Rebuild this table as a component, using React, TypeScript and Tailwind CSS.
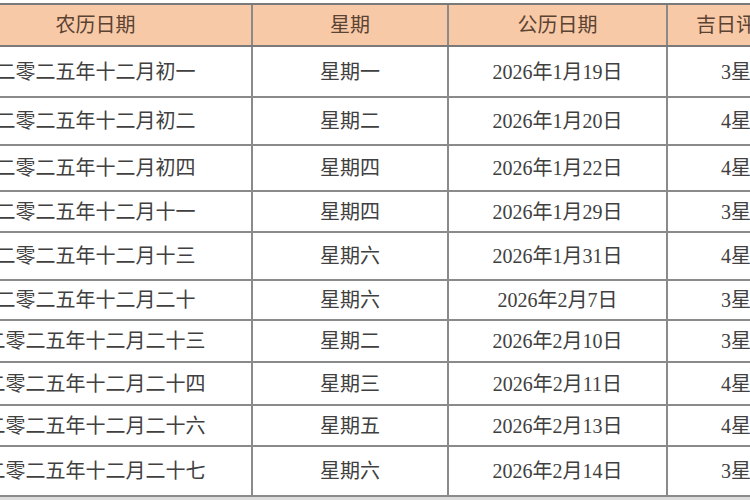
import React from "react";

const rows: { lunar: string; week: string; date: string; score: string; h: string }[] = [
  { lunar: "二零二五年十二月初一", week: "星期一", date: "2026年1月19日", score: "3星", h: "h-[51px]" },
  { lunar: "二零二五年十二月初二", week: "星期二", date: "2026年1月20日", score: "4星", h: "h-[48px]" },
  { lunar: "二零二五年十二月初四", week: "星期四", date: "2026年1月22日", score: "4星", h: "h-[46px]" },
  { lunar: "二零二五年十二月十一", week: "星期四", date: "2026年1月29日", score: "3星", h: "h-[41px]" },
  { lunar: "二零二五年十二月十三", week: "星期六", date: "2026年1月31日", score: "4星", h: "h-[48px]" },
  { lunar: "二零二五年十二月二十", week: "星期六", date: "2026年2月7日", score: "3星", h: "h-[40px]" },
  { lunar: "二零二五年十二月二十三", week: "星期二", date: "2026年2月10日", score: "3星", h: "h-[42px]" },
  { lunar: "二零二五年十二月二十四", week: "星期三", date: "2026年2月11日", score: "4星", h: "h-[43px]" },
  { lunar: "二零二五年十二月二十六", week: "星期五", date: "2026年2月13日", score: "4星", h: "h-[41px]" },
  { lunar: "二零二五年十二月二十七", week: "星期六", date: "2026年2月14日", score: "3星", h: "h-[50px]" },
];

const cell = "flex items-center justify-center border-r-2 border-[#8a8a8a] whitespace-nowrap overflow-hidden";

export default function App() {
  return (
    <div
      className="w-[750px] h-[500px] overflow-hidden bg-white pt-[3px]"
      style={{ fontFamily: '"Liberation Serif", "Noto Sans CJK SC", serif' }}
    >
      <div className="ml-[-60px] w-[866px] border-t-2 border-[#7a7a7a]">
        <div className="grid grid-cols-[313px_196px_219px_138px] h-[42px] bg-[#f8c9a7] border-b-2 border-[#7a7a7a] text-[#5a4332] text-[20px]">
          <div className={cell + " border-[#7a6a5f]"}>农历日期</div>
          <div className={cell + " border-[#7a6a5f]"}>星期</div>
          <div className={cell + " border-[#7a6a5f]"}>公历日期</div>
          <div className={cell + " border-[#7a6a5f]"}>吉日评分</div>
        </div>
        {rows.map((r, i) => (
          <div
            key={i}
            className={"grid grid-cols-[313px_196px_219px_138px] border-b-2 border-[#8a8a8a] text-[#404040] text-[20px] " + r.h}
          >
            <div className={cell}>{r.lunar}</div>
            <div className={cell}>{r.week}</div>
            <div className={cell}>{r.date}</div>
            <div className={cell}>{r.score}</div>
          </div>
        ))}
        <div className="h-[4px] bg-[#dcdcdc]" />
      </div>
    </div>
  );
}
